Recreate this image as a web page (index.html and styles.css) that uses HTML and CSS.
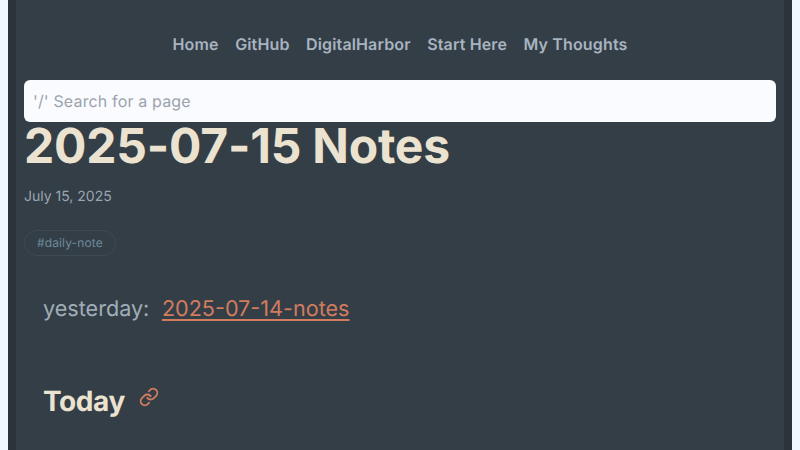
FILE: index.html
```html
<!DOCTYPE html>
<html lang="en">
<head>
    <meta charset="UTF-8">
    <meta name="viewport" content="width=device-width, initial-scale=1.0">
    <title>2025-07-15 Notes</title>
    <link rel="stylesheet" href="styles.css">
</head>
<body>
    <div class="page">
        <div class="content">
            <nav class="nav">
                <a href="#">Home</a>
                <a href="#">GitHub</a>
                <a href="#">DigitalHarbor</a>
                <a href="#">Start Here</a>
                <a href="#">My Thoughts</a>
            </nav>

            <input class="search" type="text" placeholder="'/' Search for a page">

            <h1 class="title">2025-07-15 Notes</h1>
            <p class="date">July 15, 2025</p>

            <div class="tags">
                <a class="tag" href="#">#daily-note</a>
            </div>

            <div class="note">
                <p class="yesterday">yesterday: <a href="#">2025-07-14-notes</a></p>
                <h2 class="heading">
                    Today
                    <a class="anchor" href="#">
                        <svg width="20" height="20" viewBox="0 0 24 24" fill="none" stroke="currentColor" stroke-width="2.2" stroke-linecap="round" stroke-linejoin="round">
                            <path d="M10 13a5 5 0 0 0 7.54.54l3-3a5 5 0 0 0-7.07-7.07l-1.72 1.71"/>
                            <path d="M14 11a5 5 0 0 0-7.54-.54l-3 3a5 5 0 0 0 7.07 7.07l1.71-1.71"/>
                        </svg>
                    </a>
                </h2>
            </div>
        </div>
    </div>
</body>
</html>
```

FILE: styles.css
```css
html, body {
    height: 100%;
}

body {
    margin: 0;
    padding: 0 8px;
    box-sizing: border-box;
    background-color: #eff9fe;
    font-family: 'Inter', sans-serif;
    text-rendering: geometricPrecision;
    overflow: hidden;
}

.page {
    height: 100%;
    padding: 0 8px;
    background-color: #2c333b;
}

.content {
    height: 100%;
    padding: 0 8px;
    background-color: #343e47;
}

.nav {
    display: flex;
    justify-content: center;
    gap: 16.5px;
    padding-top: 35px;
    height: 45px;
}

.nav a {
    color: #a8b4c0;
    font-size: 16px;
    font-weight: 600;
    letter-spacing: 0.14px;
    line-height: 19px;
    text-decoration: none;
}

.search {
    display: block;
    width: 100%;
    height: 42px;
    padding: 0 9px;
    box-sizing: border-box;
    border: none;
    border-radius: 6px;
    background-color: #f9fbfe;
    font-family: inherit;
    font-size: 16px;
    letter-spacing: 0.15px;
    text-rendering: geometricPrecision;
}

.search::placeholder {
    color: #9ca3af;
    opacity: 1;
}

.title {
    margin: 0;
    color: #ebe3d0;
    font-size: 48px;
    font-weight: 700;
    letter-spacing: -0.2px;
    line-height: 48px;
}

.date {
    margin: 17px 0 0;
    color: #9aa6b2;
    font-size: 14px;
    line-height: 20px;
}

.tags {
    display: flex;
    margin-top: 23px;
}

.tag {
    padding: 0 12px;
    border: 1px solid #3f4a54;
    border-radius: 13px;
    color: #6b8b9c;
    font-size: 12px;
    letter-spacing: 0.12px;
    line-height: 24px;
    text-decoration: none;
}

.note {
    padding: 0 19px;
}

.yesterday {
    margin: 39px 0 0;
    color: #a0aeb8;
    font-size: 21.6px;
    line-height: 28px;
}

.yesterday a {
    margin-left: 6.5px;
    color: #d17c5f;
    text-decoration-thickness: 2px;
    text-underline-offset: 3px;
}

.heading {
    display: flex;
    align-items: center;
    gap: 14px;
    margin: 60px 0 0;
    color: #ebe3d0;
    font-size: 28px;
    font-weight: 700;
    letter-spacing: -0.4px;
    line-height: 36px;
}

.anchor {
    display: flex;
    color: #d17c5f;
    margin-bottom: 8px;
}
```
